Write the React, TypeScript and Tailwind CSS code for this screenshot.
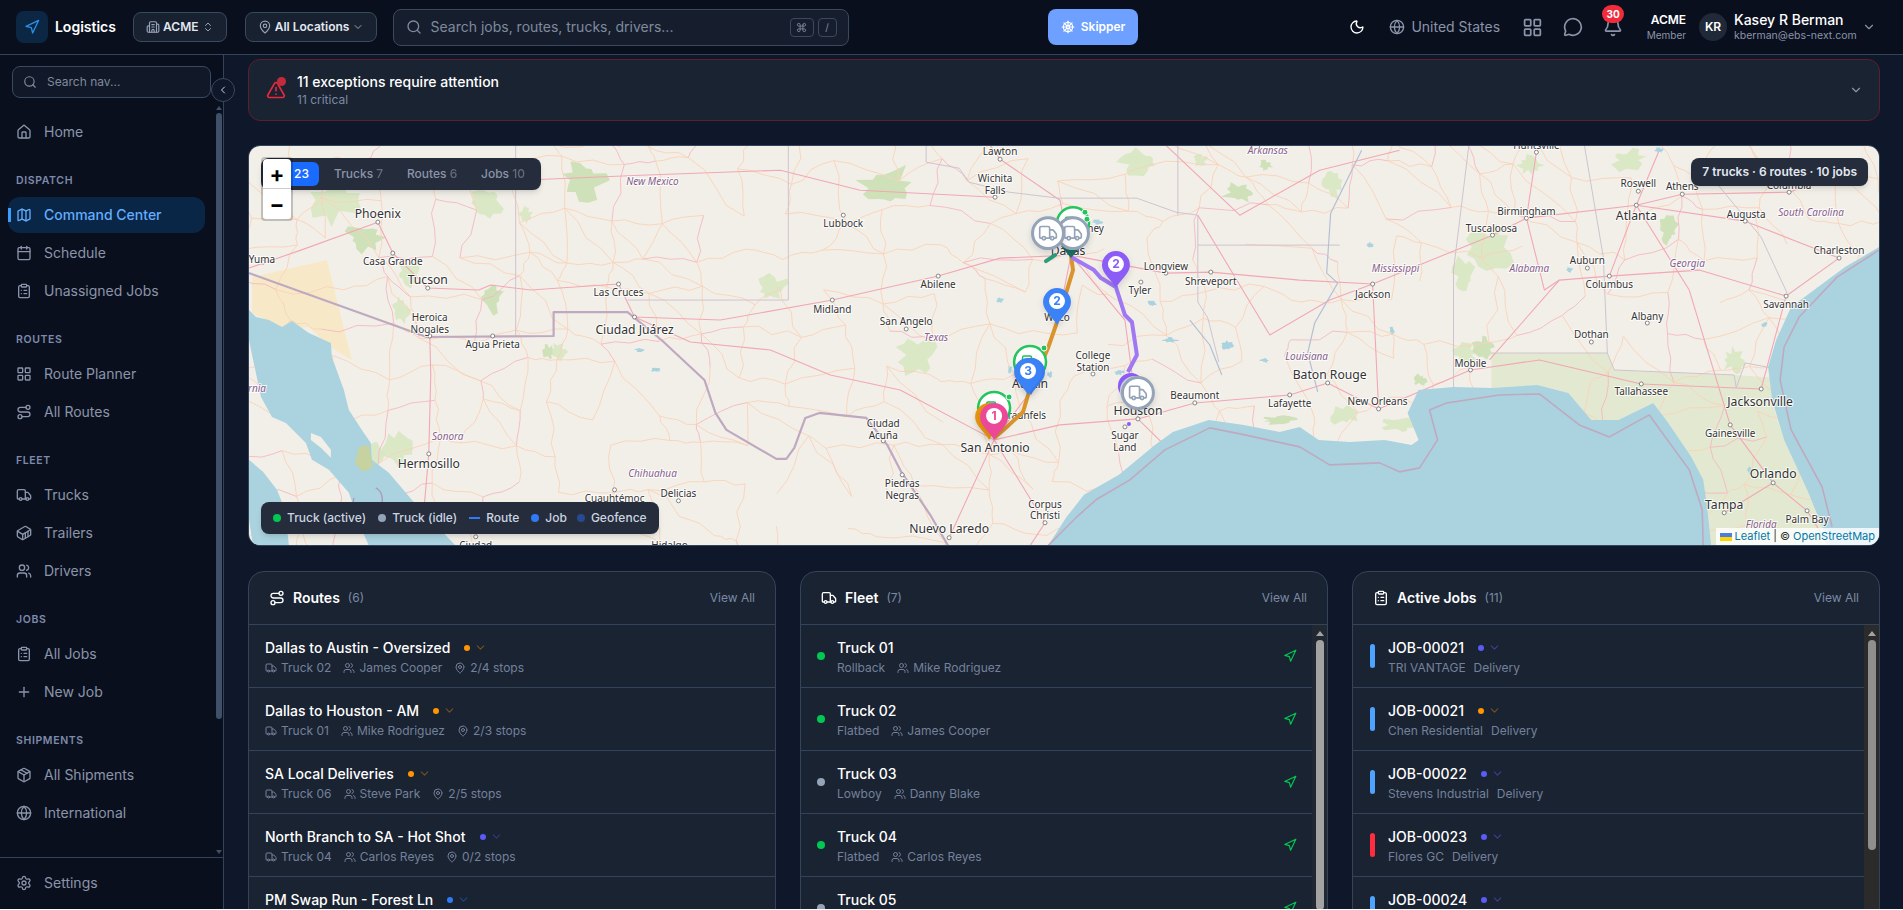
// Logistics command center: top bar, sidebar, map, and the three list panels
import type { ReactNode } from 'react';
import {
  Bell, Building2, Calendar, ChevronDown, ChevronLeft, ChevronsUpDown, ClipboardList, Command,
  Container, Globe, House, LayoutGrid, Map as MapIcon, MapPin, MessageCircle, Moon, Navigation,
  Package, Plus, Route, Search, Settings, ShipWheel, TriangleAlert, Truck, Users,
} from 'lucide-react';

// ── Map drawing helpers ──

const rnd = (n: number) => {
  const x = Math.sin(n * 12.9898) * 43758.5453;
  return x - Math.floor(x);
};

const wiggle = (a: number[], b: number[], seed: number, amp = 0.07) => {
  const pts: string[] = [];
  const dx = b[0] - a[0];
  const dy = b[1] - a[1];
  for (let i = 0; i <= 4; i++) {
    const t = i / 4;
    const off = i === 0 || i === 4 ? 0 : (rnd(seed + i) - 0.5) * amp * 2;
    pts.push(`${(a[0] + dx * t - dy * off).toFixed(1)},${(a[1] + dy * t + dx * off).toFixed(1)}`);
  }
  return pts.join(' ');
};

const blob = (cx: number, cy: number, rx: number, ry: number, seed: number) => {
  const pts: string[] = [];
  for (let i = 0; i < 18; i++) {
    const ang = (i / 18) * Math.PI * 2;
    const r = 0.45 + rnd(seed + i * 3) * 0.7;
    pts.push(`${(cx + Math.cos(ang) * rx * r).toFixed(1)},${(cy + Math.sin(ang) * ry * r).toFixed(1)}`);
  }
  return pts.join(' ');
};

// Minor road web, painted under the water
const minorRoads: { pts: string; pink: boolean }[] = [];
const nodeAt = (c: number, r: number) => [
  240 + c * 46 + (rnd(c * 31 + r * 7) - 0.5) * 34,
  130 + r * 40 + (rnd(c * 13 + r * 17 + 5) - 0.5) * 30,
];
for (let c = 0; c < 37; c++) {
  for (let r = 0; r < 11; r++) {
    const a = nodeAt(c, r);
    const pink = rnd(c * 17 + r * 3) < 0.22;
    if (rnd(c * 3 + r * 11) < 0.72) minorRoads.push({ pts: wiggle(a, nodeAt(c + 1, r), c * 5 + r), pink });
    if (rnd(c * 7 + r * 5 + 2) < 0.68) minorRoads.push({ pts: wiggle(a, nodeAt(c, r + 1), c * 9 + r * 2), pink });
    if (rnd(c * 2 + r * 19 + 9) < 0.2) minorRoads.push({ pts: wiggle(a, nodeAt(c + 1, r + 1), c + r * 23), pink: false });
  }
}

const pinkRoads: number[][][] = [
  [[248, 268], [300, 250], [377, 222], [392, 253], [427, 288], [478, 290], [490, 285], [530, 290], [618, 284], [634, 317], [690, 342], [770, 350], [830, 375], [900, 390], [994, 440], [1060, 425], [1138, 419], [1195, 403], [1290, 395], [1328, 383], [1379, 409], [1471, 370], [1540, 360], [1642, 384], [1762, 389]],
  [[634, 317], [720, 320], [832, 300], [938, 276], [1000, 258], [1071, 255], [1166, 273], [1211, 272], [1300, 280], [1373, 284], [1493, 235], [1527, 218], [1637, 205], [1746, 221], [1840, 258]],
  [[949, 538], [994, 440], [1028, 395], [1057, 325], [1071, 255], [1060, 200], [1000, 159], [990, 145]],
  [[1071, 255], [1125, 320], [1138, 419], [1200, 480]],
  [[994, 440], [1045, 523], [1030, 546]],
  [[1373, 284], [1379, 409]],
  [[1527, 218], [1545, 290], [1560, 280], [1610, 276], [1637, 205], [1660, 150]],
  [[1637, 205], [1683, 194], [1790, 192], [1850, 170]],
  [[1560, 280], [1490, 360]],
  [[1637, 205], [1690, 290], [1731, 425], [1774, 483], [1725, 513]],
  [[1774, 483], [1808, 511], [1830, 546]],
  [[1762, 389], [1787, 296], [1840, 258]],
  [[1787, 296], [1700, 270], [1610, 276]],
  [[1166, 145], [1240, 215], [1320, 170], [1400, 150]],
  [[1198, 215], [1270, 335], [1330, 300], [1373, 284]],
  [[1537, 152], [1527, 218]],
  [[520, 180], [640, 175], [780, 170], [860, 190], [995, 197]],
  [[428, 454], [430, 375], [429, 336]],
  [[428, 454], [420, 546]],
];

const waterGulf = '1048,546 1066,518 1084,495 1119,475 1155,445 1173,432 1209,420 1244,425 1280,432 1300,427 1319,440 1350,442 1385,440 1412,445 1419,440 1408,413 1419,390 1454,387 1492,388 1538,385 1569,393 1592,420 1619,420 1654,403 1669,423 1692,457 1704,480 1708,507 1712,546';
const waterAtlantic = '1880,247 1846,267 1819,287 1792,307 1777,340 1769,367 1773,400 1785,440 1808,490 1831,546 1880,546';
const waterCortez = '248,310 255,317 268,320 281,327 291,321 308,333 330,343 331,357 343,390 348,410 363,433 370,443 371,460 388,473 411,500 455,546 368,546 361,530 348,493 328,470 311,460 305,443 285,423 271,417 260,397 250,350 248,340';
const waterPacific = '248,460 262,472 276,490 284,510 288,546 252,546 248,520';

const borderLines = [
  '248,273 426,337 553,336 553,312 627,312 661,340 690,367 704,380 715,413 726,430 776,459 786,459 794,448 805,418 819,413 866,418 887,445 901,472 930,515 948,546',
  '1048,546 1078,516 1096,500 1130,480 1165,450 1210,428 1245,435 1300,447 1330,465 1380,463 1400,472 1420,468 1438,440 1430,410 1447,403 1500,395 1540,394 1580,425 1610,437 1650,415 1690,470 1703,510 1704,546',
  '1880,250 1838,277 1800,317 1785,347 1781,380 1792,430 1823,487 1833,527',
];

const stateLines = [
  '515,145 515,336',
  '788,145 788,300 627,300',
  '926,145 926,162 959,168 969,182 1009,192 1059,198 1137,198 1176,212 1198,215',
  '1178,145 1178,215',
  '1198,215 1198,302 1208,318 1219,362',
  '1198,245 1340,245',
  '1470,140 1454,270 1454,397',
  '1585,145 1604,257 1608,353 1492,353',
  '1608,353 1615,370 1735,375 1737,388 1746,363 1773,368',
  '1719,185 1762,237 1788,293',
];

const riverLines = [
  '1362,150 1331,213 1327,273 1338,283 1315,323 1308,353 1318,392',
  '1190,320 1210,345 1222,375',
];

type Label = { t: string; x: number; y: number; big?: boolean; state?: boolean; end?: boolean };

const labels: Label[] = [
  { t: 'Phoenix', x: 377, y: 218, big: true }, { t: 'Yuma', x: 261, y: 263 }, { t: 'Casa Grande', x: 392, y: 265 },
  { t: 'Tucson', x: 427, y: 284, big: true }, { t: 'Heroica', x: 429, y: 321 }, { t: 'Nogales', x: 429, y: 333 },
  { t: 'Agua Prieta', x: 492, y: 348 }, { t: 'Las Cruces', x: 618, y: 296 }, { t: 'Ciudad Juárez', x: 634, y: 334, big: true },
  { t: 'Hermosillo', x: 428, y: 468, big: true }, { t: 'Cuauhtémoc', x: 614, y: 502 }, { t: 'Delicias', x: 678, y: 497 },
  { t: 'Ciudad', x: 475, y: 549 }, { t: 'Hidalgo', x: 669, y: 549 },
  { t: 'New Mexico', x: 652, y: 185, state: true }, { t: 'Sonora', x: 447, y: 440, state: true }, { t: 'Chihuahua', x: 652, y: 477, state: true },
  { t: 'California', x: 265, y: 392, state: true, end: true },
  { t: 'Lawton', x: 1000, y: 155 }, { t: 'Wichita', x: 995, y: 182 }, { t: 'Falls', x: 995, y: 194 }, { t: 'Lubbock', x: 843, y: 227 },
  { t: 'Abilene', x: 938, y: 288 }, { t: 'Midland', x: 832, y: 313 }, { t: 'San Angelo', x: 906, y: 325 }, { t: 'Texas', x: 936, y: 341, state: true },
  { t: 'McKinney', x: 1104, y: 232, end: true }, { t: 'Longview', x: 1166, y: 270 }, { t: 'Tyler', x: 1140, y: 294 }, { t: 'Shreveport', x: 1211, y: 285 },
  { t: 'Arkansas', x: 1268, y: 154, state: true }, { t: 'College', x: 1093, y: 359 }, { t: 'Station', x: 1093, y: 371 }, { t: 'Waco', x: 1057, y: 321 },
  { t: 'Austin', x: 1030, y: 388, big: true }, { t: 'New Braunfels', x: 1046, y: 419, end: true }, { t: 'San Antonio', x: 995, y: 452, big: true },
  { t: 'Dallas', x: 1068, y: 255, big: true },
  { t: 'Houston', x: 1138, y: 415, big: true }, { t: 'Sugar', x: 1125, y: 439 }, { t: 'Land', x: 1125, y: 451 }, { t: 'Beaumont', x: 1195, y: 399 },
  { t: 'Lafayette', x: 1290, y: 407 }, { t: 'Louisiana', x: 1307, y: 360, state: true }, { t: 'Baton Rouge', x: 1330, y: 379, big: true },
  { t: 'Ciudad', x: 883, y: 427 }, { t: 'Acuña', x: 883, y: 439 }, { t: 'Piedras', x: 902, y: 487 }, { t: 'Negras', x: 902, y: 499 },
  { t: 'Corpus', x: 1045, y: 508 }, { t: 'Christi', x: 1045, y: 519 }, { t: 'Nuevo Laredo', x: 949, y: 533, big: true },
  { t: 'Huntsville', x: 1537, y: 149 }, { t: 'Roswell', x: 1639, y: 187 }, { t: 'Athens', x: 1683, y: 190 }, { t: 'Atlanta', x: 1637, y: 220, big: true },
  { t: 'Columbia', x: 1790, y: 189 }, { t: 'Birmingham', x: 1527, y: 215 }, { t: 'Tuscaloosa', x: 1492, y: 232 }, { t: 'Augusta', x: 1747, y: 218 },
  { t: 'South Carolina', x: 1812, y: 216, state: true }, { t: 'Charleston', x: 1840, y: 254 }, { t: 'Mississippi', x: 1396, y: 272, state: true },
  { t: 'Alabama', x: 1530, y: 272, state: true }, { t: 'Auburn', x: 1588, y: 264 }, { t: 'Columbus', x: 1610, y: 288 }, { t: 'Georgia', x: 1688, y: 267, state: true },
  { t: 'Jackson', x: 1373, y: 298 }, { t: 'Savannah', x: 1787, y: 308 }, { t: 'Albany', x: 1648, y: 320 }, { t: 'Dothan', x: 1592, y: 338 },
  { t: 'Mobile', x: 1471, y: 367 }, { t: 'New Orleans', x: 1378, y: 405 }, { t: 'Tallahassee', x: 1642, y: 395 }, { t: 'Jacksonville', x: 1761, y: 406, big: true },
  { t: 'Gainesville', x: 1731, y: 437 }, { t: 'Orlando', x: 1774, y: 478, big: true }, { t: 'Tampa', x: 1725, y: 509, big: true },
  { t: 'Palm Bay', x: 1808, y: 523 }, { t: 'Florida', x: 1762, y: 528, state: true },
];

const cityDots = [
  [377, 222], [262, 262], [392, 253], [427, 288], [429, 336], [492, 336], [618, 284], [634, 317], [428, 454], [614, 490], [678, 501], [475, 537],
  [1000, 159], [995, 197], [843, 215], [938, 276], [832, 300], [906, 329], [1166, 273], [1141, 282], [1211, 272], [1093, 374], [1138, 419], [1125, 427],
  [1195, 403], [1290, 395], [1328, 383], [883, 441], [902, 475], [1045, 523], [949, 538], [1537, 152], [1639, 191], [1683, 194], [1637, 205], [1790, 192],
  [1527, 218], [1493, 235], [1746, 221], [1840, 258], [1588, 268], [1610, 276], [1373, 284], [1787, 296], [1648, 323], [1592, 342], [1471, 370], [1379, 409],
  [1642, 384], [1762, 389], [1731, 425], [1774, 483], [1725, 513], [1808, 511],
];

const forests: number[][] = [
  [583, 180, 24, 20], [486, 203, 18, 16], [336, 200, 28, 24], [365, 237, 22, 16], [408, 273, 12, 14], [399, 310, 10, 16], [490, 297, 14, 18], [525, 215, 7, 9],
  [772, 288, 18, 14], [887, 188, 34, 24], [916, 355, 20, 22], [1140, 162, 22, 14], [1240, 192, 18, 12], [1333, 185, 10, 14], [1200, 160, 8, 6], [1265, 165, 8, 6],
  [1492, 247, 26, 22], [1465, 273, 12, 18], [1669, 230, 10, 16], [1735, 360, 12, 14], [1465, 353, 14, 10], [1485, 347, 12, 12], [1530, 165, 14, 10], [1630, 160, 18, 12],
  [1420, 380, 8, 6], [1345, 415, 18, 10], [1400, 425, 18, 8], [1280, 420, 20, 5], [372, 455, 12, 18], [395, 448, 16, 18], [548, 352, 7, 8], [558, 352, 9, 9],
];

const lakes: number[][] = [
  [1098, 222, 6, 3], [1152, 303, 5, 3], [1170, 340, 8, 3], [1120, 372, 6, 3], [1228, 345, 8, 5], [1265, 360, 5, 3], [1392, 330, 3, 5], [1370, 245, 4, 3],
  [1750, 470, 3, 5], [1765, 325, 4, 3], [1660, 150, 5, 3], [1570, 270, 4, 4], [1050, 375, 3, 4], [1000, 300, 4, 3], [1010, 370, 3, 5], [640, 350, 6, 2], [655, 370, 6, 2],
];

function Pin({ x, tip, color, n }: { x: number; tip: number; color: string; n?: string }) {
  const c = tip - 23;
  return (
    <g className="drop-shadow-md">
      <path d={`M${x} ${tip}C${x - 4} ${tip - 8} ${x - 14} ${tip - 14} ${x - 14} ${c}A14 14 0 1 1 ${x + 14} ${c}C${x + 14} ${tip - 14} ${x + 4} ${tip - 8} ${x} ${tip}Z`} fill={color} />
      {n && (
        <>
          <circle cx={x} cy={c - 1} r="8" fill="#fff" />
          <text x={x} y={c + 3} textAnchor="middle" fontSize="12" fontWeight="700" fill={color} fontFamily="Inter, sans-serif">{n}</text>
        </>
      )}
    </g>
  );
}

function GreenTruck({ x, y, dots }: { x: number; y: number; dots: number[][] }) {
  return (
    <g>
      <circle cx={x} cy={y} r="16" fill="#fff" stroke="#22c55e" strokeWidth="2.5" />
      <Truck x={x - 9} y={y - 9} width="18" height="18" color="#22c55e" />
      {dots.map((d, i) => <circle key={i} cx={d[0]} cy={d[1]} r="3" fill="#22c55e" stroke="#fff" strokeWidth="1" />)}
    </g>
  );
}

function IdleTruck({ x, y }: { x: number; y: number }) {
  return (
    <g className="drop-shadow-md">
      <circle cx={x} cy={y} r="15.5" fill="#fff" stroke="#94a3b8" strokeWidth="3" />
      <Truck x={x - 10} y={y - 10} width="20" height="20" color="#94a3b8" />
    </g>
  );
}

function MapCanvas() {
  return (
    <svg viewBox="248 145 1632 401" preserveAspectRatio="xMidYMid slice" className="block w-full h-full" fontFamily="'Noto Sans', sans-serif">
      <rect x="248" y="145" width="1632" height="401" fill="#f2efe9" />
      <polygon points="251,277 326,260 336,300 351,360 329,347 308,327 286,330 251,313" fill="#f7e9c8" />
      <polygon points="1492,353 1608,353 1615,370 1735,375 1780,378 1772,400 1785,440 1808,490 1831,546 1712,546 1708,507 1692,457 1654,403 1619,420 1592,420 1569,393 1538,385 1492,388" fill="#e2e9d0" />
      {forests.map((f, i) => (
        <polygon key={i} points={blob(f[0], f[1], f[2], f[3], i * 7 + 1)} fill={i % 3 === 0 ? '#c9deb0' : '#d6e6c0'} opacity="0.85" />
      ))}
      {minorRoads.map((r, i) => (
        <polyline key={i} points={r.pts} fill="none" stroke={r.pink ? '#f6b8c0' : '#f9d2b8'} strokeWidth="0.9" />
      ))}
      {pinkRoads.map((road, i) => (
        <polyline key={i} points={road.map((p) => p.join(',')).join(' ')} fill="none" stroke="#f2a7b4" strokeWidth="1.1" strokeLinejoin="round" />
      ))}
      {lakes.map((l, i) => <polygon key={i} points={blob(l[0], l[1], l[2], l[3], i * 5 + 3)} fill="#aad3df" />)}
      {stateLines.map((s, i) => <polyline key={i} points={s} fill="none" stroke="#cfc3cf" strokeWidth="1" />)}
      {riverLines.map((s, i) => <polyline key={i} points={s} fill="none" stroke="#b4bfd4" strokeWidth="1.2" />)}
      <polygon points={waterGulf} fill="#aad3df" />
      <polygon points={waterAtlantic} fill="#aad3df" />
      <polygon points={waterCortez} fill="#aad3df" />
      <polygon points={waterPacific} fill="#aad3df" />
      <polygon points="310,433 320,437 330,450 330,458 320,448 310,440" fill="#f2efe9" />
      <polygon points="358,447 368,445 372,468 362,472 354,464" fill="#c6d2a0" />
      {borderLines.map((s, i) => <polyline key={i} points={s} fill="none" stroke="#bfa9c0" strokeWidth={i === 0 ? 2.2 : 1.6} strokeLinejoin="round" />)}
      <path d="M353 498c-3 12 8 18 20 14s10-20 2-24" fill="none" stroke="#a99db8" strokeWidth="1.4" />
      {cityDots.map((d, i) => <circle key={i} cx={d[0]} cy={d[1]} r="2" fill="#fff" stroke="#6b6b6b" strokeWidth="0.8" />)}
      {labels.map((l, i) => (
        <text
          key={i}
          x={l.x}
          y={l.y}
          textAnchor={l.end ? 'end' : 'middle'}
          fontSize={l.big ? 12.2 : 10}
          fontStyle={l.state ? 'italic' : 'normal'}
          fill={l.state ? '#86608c' : '#333'}
          stroke="#fff"
          strokeOpacity="0.8"
          strokeWidth="2"
          paintOrder="stroke"
        >
          {l.t}
        </text>
      ))}

      {/* routes */}
      <polyline points="1046,261 1055,255" fill="none" stroke="#2a9d7c" strokeWidth="4" strokeLinecap="round" />
      <polyline points="1071,255 1073,270 1067,290 1057,322 1048,348 1028,395 1023,412 1009,425 994,438" fill="none" stroke="#d9942e" strokeWidth="4" strokeLinejoin="round" />
      <polyline points="1071,257 1094,270 1101,278 1116,287 1125,315 1132,322 1137,355 1128,372" fill="none" stroke="#9f78f2" strokeWidth="4" strokeLinejoin="round" />

      {/* markers */}
      <GreenTruck x={1073} y={223} dots={[[1085, 212], [1087, 219]]} />
      <path d="M1061 246L1071 258L1081 246Z" fill="#1e6f66" />
      <IdleTruck x={1073} y={233} />
      <IdleTruck x={1048} y={233} />
      <Pin x={1057} tip={325} color="#3b82f6" n="2" />
      <Pin x={1116} tip={288} color="#8b5cf6" n="2" />
      <GreenTruck x={1030} y={362} dots={[[1044, 348]]} />
      <Pin x={1031} tip={395} color="#3b82f6" />
      <Pin x={1028} tip={395} color="#3b82f6" n="3" />
      <GreenTruck x={994} y={408} dots={[[1009, 397]]} />
      <Pin x={989} tip={440} color="#e8950f" />
      <Pin x={994} tip={440} color="#ec4899" n="1" />
      <circle cx="1131" cy="386" r="13" fill="#8b5cf6" />
      <circle cx="1135" cy="391" r="15" fill="#cbd5e1" />
      <IdleTruck x={1138} y={393} />
      <circle cx="1129" cy="424" r="2" fill="#8b5cf6" />
    </svg>
  );
}

// ── Sidebar ──

const navSections: { label: string; items: { name: string; icon: ReactNode; active?: boolean }[] }[] = [
  {
    label: 'DISPATCH',
    items: [
      { name: 'Command Center', icon: <MapIcon size={16} />, active: true },
      { name: 'Schedule', icon: <Calendar size={16} /> },
      { name: 'Unassigned Jobs', icon: <ClipboardList size={16} /> },
    ],
  },
  {
    label: 'ROUTES',
    items: [
      { name: 'Route Planner', icon: <LayoutGrid size={16} /> },
      { name: 'All Routes', icon: <Route size={16} /> },
    ],
  },
  {
    label: 'FLEET',
    items: [
      { name: 'Trucks', icon: <Truck size={16} /> },
      { name: 'Trailers', icon: <Container size={16} /> },
      { name: 'Drivers', icon: <Users size={16} /> },
    ],
  },
  {
    label: 'JOBS',
    items: [
      { name: 'All Jobs', icon: <ClipboardList size={16} /> },
      { name: 'New Job', icon: <Plus size={16} /> },
    ],
  },
  {
    label: 'SHIPMENTS',
    items: [
      { name: 'All Shipments', icon: <Package size={16} /> },
      { name: 'International', icon: <Globe size={16} /> },
    ],
  },
];

function NavItem({ name, icon, active }: { name: string; icon: ReactNode; active?: boolean }) {
  return (
    <div className={`relative flex items-center gap-3 h-9 pl-2 rounded-xl text-sm ${active ? 'bg-[#0a2647] text-[#63adff] font-medium' : 'text-[#8a95a9]'}`}>
      {active && <span className="absolute left-0 top-[11px] h-[14px] w-[3px] bg-[#3b9eff]" />}
      <span className="shrink-0 w-4 h-4">{icon}</span>
      <span className="whitespace-nowrap">{name}</span>
    </div>
  );
}

function Sidebar() {
  return (
    <aside className="relative flex flex-col w-[224px] shrink-0 bg-[#0a0f1e] border-r border-[#33445a]">
      <div className="px-3 pt-[11px]">
        <div className="flex items-center gap-2.5 h-8 w-[199px] px-[10px] rounded-lg border border-[#3a4a5e] bg-[#111827] text-[12px] text-[#7f8a9e]">
          <Search size={14} className="shrink-0" />
          <span>Search nav...</span>
        </div>
      </div>
      <button className="absolute z-10 left-[211px] top-[23px] flex items-center justify-center w-6 h-6 rounded-full border border-[#3a4a5e] bg-[#0f172a] text-[#cbd5e1]">
        <ChevronLeft size={12} />
      </button>
      <div className="flex flex-1 min-h-0 overflow-hidden">
        <nav className="w-[215px] shrink-0 pl-2 pr-[10px] pt-4">
          <NavItem name="Home" icon={<House size={16} />} />
          {navSections.map((s) => (
            <div key={s.label} className="mt-[23px]">
              <div className="h-4 mb-2 pl-2 text-[10.5px] leading-4 font-semibold tracking-[0.06em] text-[#7d8bab]">{s.label}</div>
              <div className="flex flex-col gap-0.5">
                {s.items.map((it) => <NavItem key={it.name} {...it} />)}
              </div>
            </div>
          ))}
        </nav>
        <div className="flex flex-col items-center w-[8px] pt-[8px] pb-[3px]">
          <span className="w-0 h-0 border-x-[3px] border-x-transparent border-b-[4px] border-b-[#3f5068]" />
          <span className="w-[6px] h-[606px] mt-[3px] rounded-full bg-[#3f5068]" />
          <span className="mt-auto w-0 h-0 border-x-[3px] border-x-transparent border-t-[4px] border-t-[#3f5068]" />
        </div>
      </div>
      <div className="h-[52px] border-t border-[#33445a] pl-2 pr-[10px] pt-[7px]">
        <NavItem name="Settings" icon={<Settings size={16} />} />
      </div>
    </aside>
  );
}

// ── Top bar ──

function TopBar() {
  return (
    <header className="flex items-center h-[55px] shrink-0 pl-4 pr-[27px] bg-[#0a0f1e] border-b border-[#33445a]">
      <div className="flex items-center justify-center w-8 h-8 rounded-lg bg-[#0c2744] text-[#2b8fe8]">
        <Navigation size={16} />
      </div>
      <span className="ml-[7px] w-[62px] text-sm font-semibold text-white whitespace-nowrap">Logistics</span>
      <div className="ml-4 flex items-center justify-between w-[94px] h-[30px] px-3 rounded-lg border border-[#3a4a5e] bg-[#182130] text-[#94a3b8]">
        <Building2 size={14} />
        <span className="text-[12px] font-semibold text-[#e2e8f0]">ACME</span>
        <ChevronsUpDown size={12} />
      </div>
      <div className="ml-[18px] flex items-center justify-between w-[133px] h-[30px] px-3 rounded-lg border border-[#3a4a5e] bg-[#182130] text-[#94a3b8]">
        <MapPin size={14} />
        <span className="text-[12px] font-semibold text-[#e2e8f0]">All Locations</span>
        <ChevronDown size={12} />
      </div>
      <div className="ml-4 flex items-center w-[456px] h-[37px] pl-3 pr-[11px] rounded-lg border border-[#3a4a5e] bg-[#161e2d] text-[#7f8a9e]">
        <Search size={16} className="shrink-0" />
        <span className="ml-2 text-sm">Search jobs, routes, trucks, drivers...</span>
        <span className="ml-auto flex items-center justify-center w-6 h-[19px] rounded border border-[#3a4a5e]"><Command size={11} /></span>
        <span className="ml-1 flex items-center justify-center w-[19px] h-[19px] rounded border border-[#3a4a5e] text-[10px]">/</span>
      </div>
      <button className="ml-[199px] flex items-center justify-center gap-1.5 w-[91px] h-9 rounded-lg bg-[#6ea0ff] text-[12px] font-semibold text-white">
        <ShipWheel size={14} />
        Skipper
      </button>
      <Moon size={16} className="ml-[211px] text-white" />
      <Globe size={16} className="ml-6 text-[#8a95a9]" />
      <span className="ml-1.5 w-[89px] text-sm text-[#8a95a9] whitespace-nowrap">United States</span>
      <LayoutGrid size={21} className="ml-[22px] text-[#8a95a9]" />
      <MessageCircle size={20} className="ml-5 text-[#8a95a9]" />
      <span className="relative ml-5 w-5 h-5 text-[#8a95a9]">
        <Bell size={20} />
        <span className="absolute -top-[12px] left-[-1px] flex items-center justify-center w-[22px] h-[18px] rounded-full bg-[#ef2b3c] text-[10px] font-bold text-white">30</span>
      </span>
      <div className="ml-[13px] w-[50px] flex flex-col items-end">
        <span className="text-[12px] leading-[14px] font-semibold text-white">ACME</span>
        <span className="mt-0.5 text-[10px] leading-3 text-[#8a95a9]">Member</span>
      </div>
      <span className="ml-[13px] flex items-center justify-center w-7 h-7 rounded-full bg-[#1f2937] text-[12px] font-semibold text-white">KR</span>
      <div className="ml-[7px] w-[120px]">
        <div className="text-sm leading-4 font-medium text-white whitespace-nowrap">Kasey R Berman</div>
        <div className="mt-0.5 text-[10.5px] leading-3 text-[#8a95a9] whitespace-nowrap">kberman@ebs-next.com</div>
      </div>
      <ChevronDown size={14} className="ml-2 text-[#8a95a9]" />
    </header>
  );
}

// ── Lower panels ──

const routes = [
  { name: 'Dallas to Austin - Oversized', dot: 'bg-[#ff9500]', chev: 'text-[#ff9500]/40', truck: 'Truck 02', driver: 'James Cooper', stops: '2/4 stops' },
  { name: 'Dallas to Houston - AM', dot: 'bg-[#ff9500]', chev: 'text-[#ff9500]/40', truck: 'Truck 01', driver: 'Mike Rodriguez', stops: '2/3 stops' },
  { name: 'SA Local Deliveries', dot: 'bg-[#ff9500]', chev: 'text-[#ff9500]/40', truck: 'Truck 06', driver: 'Steve Park', stops: '2/5 stops' },
  { name: 'North Branch to SA - Hot Shot', dot: 'bg-[#5b5bf6]', chev: 'text-[#5b5bf6]/40', truck: 'Truck 04', driver: 'Carlos Reyes', stops: '0/2 stops' },
  { name: 'PM Swap Run - Forest Ln', dot: 'bg-[#2f7bf6]', chev: 'text-[#2f7bf6]/40', truck: 'Truck 05', driver: 'Danny Blake', stops: '0/3 stops' },
];

const fleet = [
  { name: 'Truck 01', kind: 'Rollback', driver: 'Mike Rodriguez', on: true },
  { name: 'Truck 02', kind: 'Flatbed', driver: 'James Cooper', on: true },
  { name: 'Truck 03', kind: 'Lowboy', driver: 'Danny Blake', on: false },
  { name: 'Truck 04', kind: 'Flatbed', driver: 'Carlos Reyes', on: true },
  { name: 'Truck 05', kind: 'Flatbed', driver: 'Steve Park', on: false },
];

const jobs = [
  { id: 'JOB-00021', client: 'TRI VANTAGE', bar: 'bg-[#4da3ff]', dot: 'bg-[#5b5bf6]', chev: 'text-[#5b5bf6]/50' },
  { id: 'JOB-00021', client: 'Chen Residential', bar: 'bg-[#4da3ff]', dot: 'bg-[#ff9500]', chev: 'text-[#ff9500]/40' },
  { id: 'JOB-00022', client: 'Stevens Industrial', bar: 'bg-[#4da3ff]', dot: 'bg-[#5b5bf6]', chev: 'text-[#5b5bf6]/50' },
  { id: 'JOB-00023', client: 'Flores GC', bar: 'bg-[#ff2d3d]', dot: 'bg-[#5b5bf6]', chev: 'text-[#5b5bf6]/50' },
  { id: 'JOB-00024', client: 'Nguyen Supply', bar: 'bg-[#4da3ff]', dot: 'bg-[#5b5bf6]', chev: 'text-[#5b5bf6]/50' },
];

function Panel({ icon, title, count, children }: { icon: ReactNode; title: string; count: number; children: ReactNode }) {
  return (
    <section className="flex flex-col min-h-[400px] rounded-t-2xl border border-[#33445a] bg-[#1a2332]">
      <div className="flex items-center h-[53px] px-5 border-b border-[#33445a]">
        <span className="text-white mr-2">{icon}</span>
        <span className="text-sm font-semibold text-white">{title}</span>
        <span className="ml-2 text-[12px] text-[#7c8aa5]">({count})</span>
        <span className="ml-auto text-[12px] text-[#7c8aa5]">View All</span>
      </div>
      {children}
    </section>
  );
}

function Scrollbar({ track, thumb, height }: { track: string; thumb: string; height: string }) {
  return (
    <div className={`flex flex-col items-center w-[15px] shrink-0 pt-[6px] ${track}`}>
      <span className="w-0 h-0 border-x-[4px] border-x-transparent border-b-[5px] border-b-[#a3a3a3]" />
      <span className={`w-[8px] mt-[4px] rounded-full ${thumb} ${height}`} />
    </div>
  );
}

const Row = ({ children }: { children: ReactNode }) => (
  <div className="flex items-center h-[63px] border-b border-[#33445a]">{children}</div>
);

function Title({ text, dot, chev }: { text: string; dot?: string; chev?: string }) {
  return (
    <div className="flex items-center h-[18px] text-sm font-medium text-white">
      <span>{text}</span>
      {dot && <span className={`ml-[14px] w-[6px] h-[6px] rounded-full ${dot}`} />}
      {dot && <ChevronDown size={13} className={`ml-1 ${chev}`} />}
    </div>
  );
}

export default function App() {
  return (
    <div className="flex flex-col h-[909px] overflow-hidden bg-[#0f172a] font-['Inter',sans-serif]">
      <TopBar />
      <div className="flex flex-1 min-h-0">
        <Sidebar />
        <main className="flex-1 min-w-0 overflow-hidden px-6 pt-1 pr-[23px]">
          {/* Exceptions banner */}
          <div className="flex items-center h-[62px] pl-[17px] pr-4 rounded-xl border border-[#5c1f2b] bg-[#1a2332]">
            <span className="relative w-[20px] h-[20px] text-[#e5293f]">
              <TriangleAlert size={20} />
              <span className="absolute -top-[3px] left-[11px] w-[9px] h-[9px] rounded-full bg-[#c22b3b]" />
            </span>
            <div className="ml-[11px]">
              <div className="text-sm leading-5 font-medium text-white">11 exceptions require attention</div>
              <div className="text-[12px] leading-4 text-[#7c8aa5]">11 critical</div>
            </div>
            <ChevronDown size={14} className="ml-auto text-[#8a95a9]" />
          </div>

          {/* Map */}
          <div className="relative mt-6 h-[401px] overflow-hidden rounded-xl border border-[#33445a]">
            <MapCanvas />
            <div className="absolute left-[12px] top-[12px] flex items-center gap-[3px] h-8 pl-1 pr-4 rounded-lg bg-[#252c3c] shadow-md text-[12px] font-medium text-[#8a95a9]">
              <span className="flex items-center justify-end w-[54px] h-6 pr-2.5 rounded-md bg-[#1a6bff] text-white">All 23</span>
              <span className="ml-3 w-[58px]">Trucks <span className="opacity-60">7</span></span>
              <span className="ml-3 w-[63px]">Routes <span className="opacity-60">6</span></span>
              <span className="ml-2">Jobs <span className="opacity-60">10</span></span>
            </div>
            <div className="absolute left-[12px] top-[11px] w-[32px] rounded-sm border-2 border-black/20 bg-clip-padding text-black">
              <div className="flex items-center justify-center h-[30px] bg-white rounded-t-sm border-b border-[#ccc] text-[22px] font-bold leading-none">+</div>
              <div className="flex items-center justify-center h-[30px] bg-white rounded-b-sm text-[22px] font-bold leading-none">−</div>
            </div>
            <div className="absolute right-[11px] top-[12px] flex items-center h-7 px-[11px] rounded-lg bg-[#252c3c] shadow-md text-[12px] font-semibold text-[#e2e8f0]">
              7 trucks · 6 routes · 10 jobs
            </div>
            <div className="absolute left-[12px] bottom-[11px] flex items-center gap-3 h-8 px-3 rounded-lg bg-[#252c3c] shadow-md text-[12px] font-medium text-[#cbd5e1]">
              <span className="flex items-center gap-1.5"><span className="w-2 h-2 rounded-full bg-[#00c853]" />Truck (active)</span>
              <span className="flex items-center gap-1.5"><span className="w-2 h-2 rounded-full bg-[#94a3b8]" />Truck (idle)</span>
              <span className="flex items-center gap-1.5"><span className="w-[11px] h-0.5 bg-[#2f7bf6]" />Route</span>
              <span className="flex items-center gap-1.5 -mr-[2px]"><span className="w-2 h-2 rounded-full bg-[#2f7bf6]" />Job</span>
              <span className="flex items-center gap-1.5"><span className="w-2 h-2 rounded-full bg-[#274a8f]" />Geofence</span>
            </div>
            <div className="absolute right-0 bottom-0 flex items-center h-[17px] px-[4px] bg-white/80 text-[11px] text-[#333]">
              <svg width="12" height="8" viewBox="0 0 12 8" className="mr-[3px]">
                <rect width="12" height="4" fill="#4C7BE1" />
                <rect y="4" width="12" height="4" fill="#FFD500" />
              </svg>
              <span className="text-[#0078a8]">Leaflet</span>
              <span className="mx-[3px]">|</span>
              <span>©&nbsp;</span>
              <span className="text-[#0078a8]">OpenStreetMap</span>
            </div>
          </div>

          {/* Routes / Fleet / Active Jobs */}
          <div className="grid grid-cols-3 gap-6 mt-[25px]">
            <Panel icon={<Route size={16} />} title="Routes" count={6}>
              {routes.map((r) => (
                <Row key={r.name}>
                  <div className="pl-4 pt-[3px]">
                    <Title text={r.name} dot={r.dot} chev={r.chev} />
                    <div className="flex items-center mt-[2px] text-[12px] text-[#74819a]">
                      <Truck size={12} className="mr-1" />{r.truck}
                      <Users size={12} className="ml-3 mr-1" />{r.driver}
                      <MapPin size={12} className="ml-3 mr-1" />{r.stops}
                    </div>
                  </div>
                </Row>
              ))}
            </Panel>

            <Panel icon={<Truck size={16} />} title="Fleet" count={7}>
              <div className="flex flex-1">
                <div className="flex-1 min-w-0">
                  {fleet.map((t) => (
                    <Row key={t.name}>
                      <span className={`ml-4 w-2 h-2 rounded-full ${t.on ? 'bg-[#00c853]' : 'bg-[#94a3b8]'}`} />
                      <div className="ml-3 pt-[3px]">
                        <Title text={t.name} />
                        <div className="flex items-center mt-[2px] text-[12px] text-[#74819a]">
                          {t.kind}
                          <Users size={12} className="ml-3 mr-1" />{t.driver}
                        </div>
                      </div>
                      <Navigation size={14} className="ml-auto mr-[15px] text-[#00c853]" />
                    </Row>
                  ))}
                </div>
                <Scrollbar track="bg-[#222831]" thumb="bg-[#a3a3a3]" height="h-[270px]" />
              </div>
            </Panel>

            <Panel icon={<ClipboardList size={16} />} title="Active Jobs" count={11}>
              <div className="flex flex-1">
                <div className="flex-1 min-w-0">
                  {jobs.map((j) => (
                    <Row key={j.client}>
                      <span className={`ml-[17px] w-[5px] h-6 rounded-full ${j.bar}`} />
                      <div className="ml-[13px] pt-[3px]">
                        <Title text={j.id} dot={j.dot} chev={j.chev} />
                        <div className="flex items-center gap-2 mt-[2px] text-[12px] text-[#74819a]">
                          <span>{j.client}</span>
                          <span>Delivery</span>
                        </div>
                      </div>
                    </Row>
                  ))}
                </div>
                <Scrollbar track="bg-[#2b2b2b]" thumb="bg-[#8f8f8f]" height="h-[210px]" />
              </div>
            </Panel>
          </div>
        </main>
      </div>
    </div>
  );
}
